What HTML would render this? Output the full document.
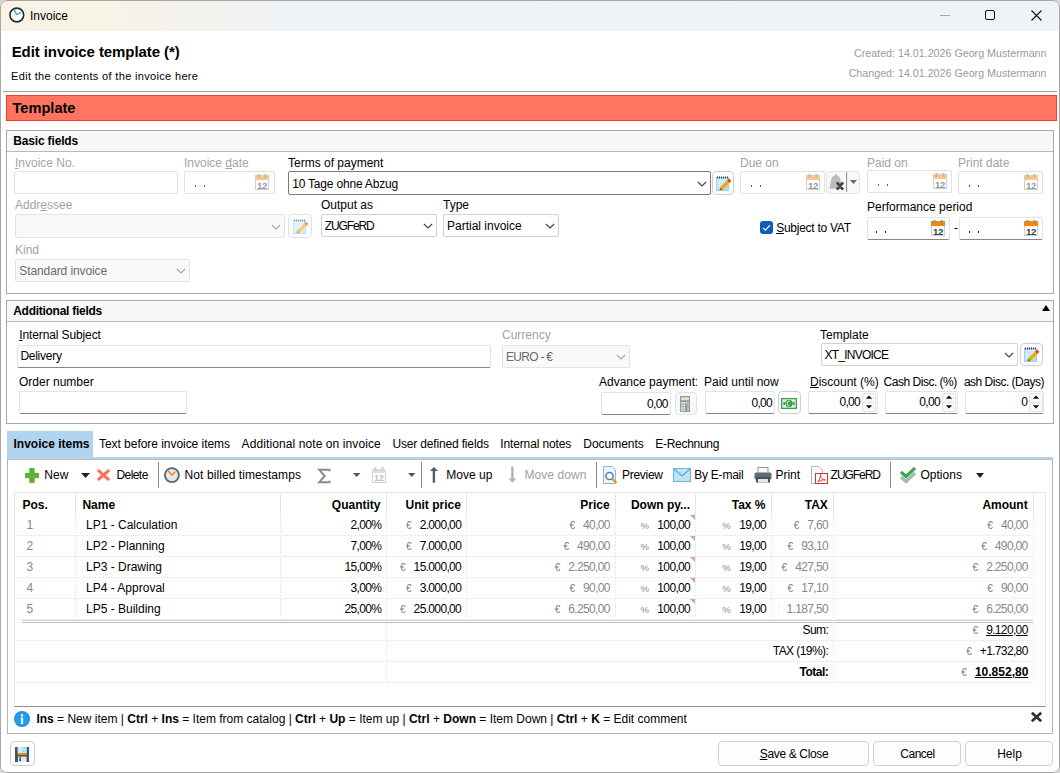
<!DOCTYPE html>
<html><head><meta charset="utf-8"><style>
html,body{margin:0;padding:0;width:1060px;height:773px;overflow:hidden;background:#d6d6d6;}
body{position:relative;font-family:"Liberation Sans",sans-serif;}
.b{position:absolute;}
.t{position:absolute;white-space:nowrap;line-height:0;}
.sym{font-size:10px;color:#7a7a7a;margin-right:8px;font-weight:normal;letter-spacing:0;}
.num{letter-spacing:-0.65px;}
.pct{font-size:9.5px;margin-right:8.5px;color:#8a8a8a;}
u{text-decoration-thickness:1px;text-underline-offset:0.5px;}
</style></head><body>
<div class="b" style="left:0;top:0;width:1060px;height:773px;background:#fff;border-radius:7px;"></div>
<div class="b" style="left:0px;top:0px;width:1060px;height:31px;background:linear-gradient(90deg,#faf3e5 0%,#f9f3e6 10%,#f2f1ed 19%,#eef2f8 29%,#eef2f9 100%);border-radius:7px 7px 0 0;"></div>
<div class="b" style="left:0px;top:0px;width:1060px;height:773px;border:1px solid #a7a7a7;border-radius:7px 7px 7px 7px;box-sizing:border-box;"></div>
<svg class="b" style="left:8px;top:7px" width="18" height="17" viewBox="0 0 18 17"><circle cx="8.8" cy="8" r="6.9" fill="#fff" stroke="#1f2b30" stroke-width="1.6"/><path d="M6.5 3.4 L8.6 7.6 L12.6 5.6" fill="none" stroke="#46b5bf" stroke-width="1.4" stroke-linecap="round" stroke-linejoin="round"/></svg>
<div class="t" style="left:30px;top:15.84px;font-size:12px;color:#000;font-weight:normal;">Invoice</div>
<div class="b" style="left:940px;top:15px;width:10px;height:1px;background:#a5a5a5;"></div>
<div class="b" style="left:985px;top:10px;width:10px;height:10px;border:1.3px solid #111;border-radius:2px;box-sizing:border-box;"></div>
<svg class="b" style="left:1031px;top:10px" width="11" height="11" viewBox="0 0 11 11"><path d="M0.5 0.5 L10.5 10.5 M10.5 0.5 L0.5 10.5" stroke="#111" stroke-width="1.1"/></svg>
<div class="t" style="left:11.7px;top:52.40px;font-size:15px;color:#000;font-weight:bold;letter-spacing:-0.085px;">Edit invoice template (*)</div>
<div class="t" style="left:11px;top:75.99px;font-size:11px;color:#000;font-weight:normal;letter-spacing:0.336px;">Edit the contents of the invoice here</div>
<div class="t" style="right:13.5px;top:53.29px;font-size:10.7px;color:#9a9a9a;font-weight:normal;">Created: 14.01.2026 Georg Mustermann</div>
<div class="t" style="right:13.5px;top:73.29px;font-size:10.7px;color:#9a9a9a;font-weight:normal;">Changed: 14.01.2026 Georg Mustermann</div>
<div class="b" style="left:3px;top:91px;width:1054px;height:1px;background:#a0a0a0;"></div>
<div class="b" style="left:6px;top:95px;width:1051px;height:26px;background:#ff7561;border:1px solid #f23e22;box-sizing:border-box;"></div>
<div class="t" style="left:12.5px;top:107.94px;font-size:14.6px;color:#000;font-weight:bold;">Template</div>
<div class="b" style="left:6px;top:130px;width:1048px;height:164px;border:1px solid #a9a9a9;box-sizing:border-box;"></div>
<div class="b" style="left:7px;top:131px;width:1046px;height:20px;background:#f7f7f7;"></div>
<div class="b" style="left:7px;top:151px;width:1046px;height:1px;background:#b9b9b9;"></div>
<div class="t" style="left:13.2px;top:140.84px;font-size:12px;color:#000;font-weight:bold;letter-spacing:-0.154px;">Basic fields</div>
<div class="t" style="left:15px;top:162.84px;font-size:12px;color:#a3a3a3;font-weight:normal;"><u>I</u>nvoice No.</div>
<div class="b" style="left:14px;top:171px;width:164px;height:23px;border:1px solid #e1e1e1;border-radius:2px;background:#fff;box-sizing:border-box;"></div>
<div class="t" style="left:184px;top:162.84px;font-size:12px;color:#a3a3a3;font-weight:normal;">Invoice <u>d</u>ate</div>
<div class="b" style="left:184px;top:171px;width:91px;height:23px;border:1px solid #e1e1e1;border-radius:2px;background:#fff;box-sizing:border-box;"></div>
<div class="b" style="left:195px;top:185px;width:1px;height:2px;background:#6b5a66;"></div>
<div class="b" style="left:204px;top:185px;width:1px;height:2px;background:#6b5a66;"></div>
<svg class="b" style="left:255px;top:174px" width="14" height="16" viewBox="0 0 14 16"><rect x="0.5" y="4.5" width="13" height="11" fill="#fff" stroke="#d0d0d0"/><rect x="0" y="1" width="14" height="5" fill="#ffc68a"/><rect x="2.6" y="0" width="1.8" height="4" fill="#a9bccb"/><rect x="9.6" y="0" width="1.8" height="4" fill="#a9bccb"/><text x="7" y="14.6" font-family="Liberation Sans" font-weight="bold" font-size="9.6" fill="#8e979c" text-anchor="middle" letter-spacing="-0.3">12</text></svg>
<div class="t" style="left:288px;top:162.84px;font-size:12px;color:#000;font-weight:normal;">Terms of payment</div>
<div class="b" style="left:288px;top:171px;width:423px;height:24px;border:1px solid #7a7a7a;border-radius:2px;background:#fff;box-sizing:border-box;"></div>
<div class="t" style="left:292.2px;top:183.84px;font-size:12px;color:#000;font-weight:normal;letter-spacing:-0.195px;">10 Tage ohne Abzug</div>
<svg class="b" style="left:697px;top:181px" width="10" height="6" viewBox="0 0 10 6"><path d="M0.9 1 L5 5 L9.1 1" fill="none" stroke="#444" stroke-width="1.15"/></svg>
<div class="b" style="left:712px;top:171px;width:22px;height:24px;border:1px solid #cfcfcf;border-radius:4px;background:#fcfcfc;box-sizing:border-box;"></div>
<svg class="b" style="left:716px;top:175px" width="15" height="16" viewBox="0 0 15 16"><g opacity="1"><rect x="0.5" y="2.5" width="12" height="13" fill="#cfeaf9" stroke="#9fcde8"/><path d="M1 15 L12 4 L12 15 Z" fill="#b3dcf3"/><path d="M1.5 1.5 v2 M3.5 1.5 v2 M5.5 1.5 v2 M7.5 1.5 v2 M9.5 1.5 v2 M11.5 1.5 v2" stroke="#2e3e4c" stroke-width="1"/><path d="M4.5 14.5 L13.2 5.8" stroke="#f2a800" stroke-width="3.2"/><path d="M12.3 6.7 L14.3 4.7" stroke="#e5421f" stroke-width="3.2"/><path d="M3.3 15.6 L5 13.2 L6 14.3 Z" fill="#333"/></g></svg>
<div class="t" style="left:740px;top:162.84px;font-size:12px;color:#a3a3a3;font-weight:normal;">Due on</div>
<div class="b" style="left:740px;top:171px;width:85px;height:23px;border:1px solid #e1e1e1;border-radius:2px;background:#fff;box-sizing:border-box;"></div>
<div class="b" style="left:751px;top:185px;width:1px;height:2px;background:#6b5a66;"></div>
<div class="b" style="left:760px;top:185px;width:1px;height:2px;background:#6b5a66;"></div>
<svg class="b" style="left:806px;top:174px" width="14" height="16" viewBox="0 0 14 16"><rect x="0.5" y="4.5" width="13" height="11" fill="#fff" stroke="#d0d0d0"/><rect x="0" y="1" width="14" height="5" fill="#ffc68a"/><rect x="2.6" y="0" width="1.8" height="4" fill="#a9bccb"/><rect x="9.6" y="0" width="1.8" height="4" fill="#a9bccb"/><text x="7" y="14.6" font-family="Liberation Sans" font-weight="bold" font-size="9.6" fill="#8e979c" text-anchor="middle" letter-spacing="-0.3">12</text></svg>
<div class="b" style="left:826px;top:171px;width:34px;height:23px;border:1px solid #e3e3e3;border-radius:4px;background:#f8f8f8;box-sizing:border-box;"></div>
<svg class="b" style="left:826px;top:171px" width="34" height="23" viewBox="0 0 34 23"><path d="M10 3 C11 3 11.5 4 11.5 4.7 C13.6 5.6 14.6 7.3 14.7 10 L15.5 17.8 H3.3 L4.8 10 C4.9 7.3 6 5.6 8.5 4.7 C8.5 4 9 3 10 3 Z" fill="#bdbdbd"/><path d="M11.6 12.4 L16.3 17.6 M16.3 12.4 L11.6 17.6" stroke="#454545" stroke-width="2.9" stroke-linecap="round"/><path d="M20.6 1 V21" stroke="#8c8c8c" stroke-width="1"/><path d="M23.9 8.9 H31 L27.45 13 Z" fill="#6a6a6a"/></svg>
<div class="t" style="left:867px;top:162.84px;font-size:12px;color:#a3a3a3;font-weight:normal;">Paid on</div>
<div class="b" style="left:867px;top:170px;width:85px;height:23px;border:1px solid #e1e1e1;border-radius:2px;background:#fff;box-sizing:border-box;"></div>
<div class="b" style="left:878px;top:184px;width:1px;height:2px;background:#6b5a66;"></div>
<div class="b" style="left:887px;top:184px;width:1px;height:2px;background:#6b5a66;"></div>
<svg class="b" style="left:933px;top:173px" width="14" height="16" viewBox="0 0 14 16"><rect x="0.5" y="4.5" width="13" height="11" fill="#fff" stroke="#d0d0d0"/><rect x="0" y="1" width="14" height="5" fill="#ffc68a"/><rect x="2.6" y="0" width="1.8" height="4" fill="#a9bccb"/><rect x="9.6" y="0" width="1.8" height="4" fill="#a9bccb"/><text x="7" y="14.6" font-family="Liberation Sans" font-weight="bold" font-size="9.6" fill="#8e979c" text-anchor="middle" letter-spacing="-0.3">12</text></svg>
<div class="t" style="left:958px;top:162.84px;font-size:12px;color:#a3a3a3;font-weight:normal;">Print date</div>
<div class="b" style="left:958px;top:171px;width:85px;height:23px;border:1px solid #e1e1e1;border-radius:2px;background:#fff;box-sizing:border-box;"></div>
<div class="b" style="left:969px;top:185px;width:1px;height:2px;background:#6b5a66;"></div>
<div class="b" style="left:978px;top:185px;width:1px;height:2px;background:#6b5a66;"></div>
<svg class="b" style="left:1024px;top:174px" width="14" height="16" viewBox="0 0 14 16"><rect x="0.5" y="4.5" width="13" height="11" fill="#fff" stroke="#d0d0d0"/><rect x="0" y="1" width="14" height="5" fill="#ffc68a"/><rect x="2.6" y="0" width="1.8" height="4" fill="#a9bccb"/><rect x="9.6" y="0" width="1.8" height="4" fill="#a9bccb"/><text x="7" y="14.6" font-family="Liberation Sans" font-weight="bold" font-size="9.6" fill="#8e979c" text-anchor="middle" letter-spacing="-0.3">12</text></svg>
<div class="t" style="left:15px;top:204.84px;font-size:12px;color:#a3a3a3;font-weight:normal;">Addr<u>e</u>ssee</div>
<div class="b" style="left:15px;top:214px;width:270px;height:24px;border:1px solid #e3e3e3;border-radius:2px;background:#f9f9f9;box-sizing:border-box;"></div>
<svg class="b" style="left:271px;top:224px" width="10" height="6" viewBox="0 0 10 6"><path d="M0.9 1 L5 5 L9.1 1" fill="none" stroke="#aaa" stroke-width="1.15"/></svg>
<div class="b" style="left:288px;top:214px;width:24px;height:24px;border:1px solid #e2e2e2;border-radius:4px;background:#fcfcfc;box-sizing:border-box;"></div>
<svg class="b" style="left:293px;top:218px" width="15" height="16" viewBox="0 0 15 16"><g opacity="0.55"><rect x="0.5" y="2.5" width="12" height="13" fill="#cfeaf9" stroke="#9fcde8"/><path d="M1 15 L12 4 L12 15 Z" fill="#b3dcf3"/><path d="M1.5 1.5 v2 M3.5 1.5 v2 M5.5 1.5 v2 M7.5 1.5 v2 M9.5 1.5 v2 M11.5 1.5 v2" stroke="#2e3e4c" stroke-width="1"/><path d="M4.5 14.5 L13.2 5.8" stroke="#f2a800" stroke-width="3.2"/><path d="M12.3 6.7 L14.3 4.7" stroke="#e5421f" stroke-width="3.2"/><path d="M3.3 15.6 L5 13.2 L6 14.3 Z" fill="#333"/></g></svg>
<div class="t" style="left:321px;top:204.84px;font-size:12px;color:#000;font-weight:normal;">Output as</div>
<div class="b" style="left:321px;top:214px;width:116px;height:23px;border:1px solid #d2d2d2;border-radius:2px;background:#fff;box-sizing:border-box;"></div>
<div class="t" style="left:324.7px;top:225.84px;font-size:12px;color:#000;font-weight:normal;letter-spacing:-1.111px;">ZUGFeRD</div>
<svg class="b" style="left:423px;top:223px" width="10" height="6" viewBox="0 0 10 6"><path d="M0.9 1 L5 5 L9.1 1" fill="none" stroke="#444" stroke-width="1.15"/></svg>
<div class="t" style="left:443px;top:204.84px;font-size:12px;color:#000;font-weight:normal;">Type</div>
<div class="b" style="left:443px;top:214px;width:116px;height:23px;border:1px solid #d2d2d2;border-radius:2px;background:#fff;box-sizing:border-box;"></div>
<div class="t" style="left:447px;top:225.84px;font-size:12px;color:#000;font-weight:normal;">Partial invoice</div>
<svg class="b" style="left:545px;top:223px" width="10" height="6" viewBox="0 0 10 6"><path d="M0.9 1 L5 5 L9.1 1" fill="none" stroke="#444" stroke-width="1.15"/></svg>
<div class="b" style="left:760px;top:221px;width:13px;height:13px;background:#0f5cc0;border-radius:3px;"></div>
<svg class="b" style="left:760px;top:221px" width="13" height="13" viewBox="0 0 13 13"><path d="M3 6.8 L5.4 9.2 L10 4.2" fill="none" stroke="#fff" stroke-width="1.2"/></svg>
<div class="t" style="left:776.2px;top:227.84px;font-size:12px;color:#000;font-weight:normal;letter-spacing:-0.266px;"><u>S</u>ubject to VAT</div>
<div class="t" style="left:867px;top:206.84px;font-size:12px;color:#000;font-weight:normal;">Performance period</div>
<div class="b" style="left:867px;top:217px;width:83px;height:23px;border:1px solid #e3e3e3;border-bottom:1px solid #858585;border-radius:2px;background:#fff;box-sizing:border-box;"></div>
<div class="b" style="left:876px;top:231px;width:1px;height:2px;background:#3a1028;"></div>
<div class="b" style="left:885px;top:231px;width:1px;height:2px;background:#3a1028;"></div>
<svg class="b" style="left:931px;top:220px" width="14" height="16" viewBox="0 0 14 16"><rect x="0.5" y="4.5" width="13" height="11" fill="#fff" stroke="#d0d0d0"/><rect x="0" y="1" width="14" height="5" fill="#ff8500"/><rect x="2.6" y="0" width="1.8" height="4" fill="#7d98aa"/><rect x="9.6" y="0" width="1.8" height="4" fill="#7d98aa"/><text x="7" y="14.6" font-family="Liberation Sans" font-weight="bold" font-size="9.6" fill="#36434b" text-anchor="middle" letter-spacing="-0.3">12</text></svg>
<div class="t" style="left:954px;top:227.84px;font-size:12px;color:#000;font-weight:normal;">-</div>
<div class="b" style="left:959px;top:217px;width:84px;height:23px;border:1px solid #e3e3e3;border-bottom:1px solid #858585;border-radius:2px;background:#fff;box-sizing:border-box;"></div>
<div class="b" style="left:969px;top:231px;width:1px;height:2px;background:#3a1028;"></div>
<div class="b" style="left:978px;top:231px;width:1px;height:2px;background:#3a1028;"></div>
<svg class="b" style="left:1024px;top:220px" width="14" height="16" viewBox="0 0 14 16"><rect x="0.5" y="4.5" width="13" height="11" fill="#fff" stroke="#d0d0d0"/><rect x="0" y="1" width="14" height="5" fill="#ff8500"/><rect x="2.6" y="0" width="1.8" height="4" fill="#7d98aa"/><rect x="9.6" y="0" width="1.8" height="4" fill="#7d98aa"/><text x="7" y="14.6" font-family="Liberation Sans" font-weight="bold" font-size="9.6" fill="#36434b" text-anchor="middle" letter-spacing="-0.3">12</text></svg>
<div class="t" style="left:15px;top:250.34px;font-size:12px;color:#a3a3a3;font-weight:normal;">Kind</div>
<div class="b" style="left:15px;top:259px;width:175px;height:23px;border:1px solid #e3e3e3;border-radius:2px;background:#f9f9f9;box-sizing:border-box;"></div>
<div class="t" style="left:19.3px;top:270.84px;font-size:12px;color:#6b6b6b;font-weight:normal;letter-spacing:-0.106px;">Standard invoice</div>
<svg class="b" style="left:176px;top:268px" width="10" height="6" viewBox="0 0 10 6"><path d="M0.9 1 L5 5 L9.1 1" fill="none" stroke="#aaa" stroke-width="1.15"/></svg>
<div class="b" style="left:6px;top:300px;width:1048px;height:124px;border:1px solid #a9a9a9;box-sizing:border-box;"></div>
<div class="b" style="left:7px;top:301px;width:1046px;height:20px;background:#f7f7f7;"></div>
<div class="b" style="left:7px;top:321px;width:1046px;height:1px;background:#b9b9b9;"></div>
<div class="t" style="left:13.2px;top:310.84px;font-size:12px;color:#000;font-weight:bold;letter-spacing:-0.271px;">Additional fields</div>
<svg class="b" style="left:1041px;top:304px" width="10" height="8" viewBox="0 0 10 8"><path d="M1 7 L5 1 L9 7 Z" fill="#000"/></svg>
<div class="t" style="left:19.2px;top:334.84px;font-size:12px;color:#000;font-weight:normal;letter-spacing:-0.112px;"><u>I</u>nternal Subject</div>
<div class="b" style="left:17px;top:345px;width:474px;height:23px;border:1px solid #e3e3e3;border-bottom:1px solid #858585;border-radius:2px;background:#fff;box-sizing:border-box;"></div>
<div class="t" style="left:20.4px;top:355.84px;font-size:12px;color:#000;font-weight:normal;letter-spacing:-0.263px;">Delivery</div>
<div class="t" style="left:502px;top:334.84px;font-size:12px;color:#a3a3a3;font-weight:normal;">Currency</div>
<div class="b" style="left:502px;top:345px;width:128px;height:23px;border:1px solid #e3e3e3;border-radius:2px;background:#f9f9f9;box-sizing:border-box;"></div>
<div class="t" style="left:506px;top:356.84px;font-size:12px;color:#6b6b6b;font-weight:normal;letter-spacing:-0.716px;">EURO - €</div>
<svg class="b" style="left:616px;top:354px" width="10" height="6" viewBox="0 0 10 6"><path d="M0.9 1 L5 5 L9.1 1" fill="none" stroke="#aaa" stroke-width="1.15"/></svg>
<div class="t" style="left:820px;top:334.84px;font-size:12px;color:#000;font-weight:normal;">Template</div>
<div class="b" style="left:821px;top:343px;width:197px;height:23px;border:1px solid #d2d2d2;border-radius:2px;background:#fff;box-sizing:border-box;"></div>
<div class="t" style="left:824.4px;top:354.84px;font-size:12px;color:#000;font-weight:normal;letter-spacing:-0.750px;">XT_INVOICE</div>
<svg class="b" style="left:1004px;top:352px" width="10" height="6" viewBox="0 0 10 6"><path d="M0.9 1 L5 5 L9.1 1" fill="none" stroke="#444" stroke-width="1.15"/></svg>
<div class="b" style="left:1020px;top:343px;width:23px;height:23px;border:1px solid #cfcfcf;border-radius:4px;background:#fcfcfc;box-sizing:border-box;"></div>
<svg class="b" style="left:1024px;top:346px" width="15" height="16" viewBox="0 0 15 16"><g opacity="1"><rect x="0.5" y="2.5" width="12" height="13" fill="#cfeaf9" stroke="#9fcde8"/><path d="M1 15 L12 4 L12 15 Z" fill="#b3dcf3"/><path d="M1.5 1.5 v2 M3.5 1.5 v2 M5.5 1.5 v2 M7.5 1.5 v2 M9.5 1.5 v2 M11.5 1.5 v2" stroke="#2e3e4c" stroke-width="1"/><path d="M4.5 14.5 L13.2 5.8" stroke="#f2a800" stroke-width="3.2"/><path d="M12.3 6.7 L14.3 4.7" stroke="#e5421f" stroke-width="3.2"/><path d="M3.3 15.6 L5 13.2 L6 14.3 Z" fill="#333"/></g></svg>
<div class="t" style="left:19px;top:381.84px;font-size:12px;color:#000;font-weight:normal;">Order number</div>
<div class="b" style="left:19px;top:391px;width:168px;height:23px;border:1px solid #e3e3e3;border-bottom:1px solid #858585;border-radius:2px;background:#fff;box-sizing:border-box;"></div>
<div class="b" style="left:599px;top:372px;width:98px;height:20px;overflow:hidden;"><div class="t" style="left:0px;top:9.84px;font-size:12px;color:#000;font-weight:normal;">Advance payment:</div></div>
<div class="b" style="left:601px;top:392px;width:70px;height:23px;border:1px solid #e3e3e3;border-bottom:1px solid #858585;border-radius:2px;background:#fff;box-sizing:border-box;"></div>
<div class="t" style="right:392.15px;top:403.84px;font-size:12px;color:#000;font-weight:normal;"><span class="num">0,00</span></div>
<div class="b" style="left:675px;top:392px;width:22px;height:23px;border:1px solid #e3e3e3;border-radius:4px;background:#f8f8f8;box-sizing:border-box;"></div>
<svg class="b" style="left:680px;top:396px" width="10" height="16" viewBox="0 0 10 16"><rect x="0" y="0" width="10" height="16" fill="#909da4"/><rect x="1.2" y="1.2" width="7.6" height="3" fill="#d6edc4"/><g fill="#f4f6f7"><rect x="1.2" y="6" width="1.6" height="1.6"/><rect x="3.4" y="6" width="1.6" height="1.6"/><rect x="5.6" y="6" width="1.2" height="1.6"/><rect x="1.2" y="8.6" width="1.6" height="1.6"/><rect x="3.4" y="8.6" width="1.6" height="1.6"/><rect x="1.2" y="11.2" width="1.6" height="1.6"/><rect x="3.4" y="11.2" width="1.6" height="1.6"/><rect x="1.2" y="13.6" width="1.6" height="1.4"/><rect x="3.4" y="13.6" width="1.6" height="1.4"/></g><rect x="7.2" y="6" width="1.8" height="4" fill="#a9d08e"/><rect x="7.2" y="11" width="1.8" height="4" fill="#f5b859"/></svg>
<div class="t" style="left:704px;top:381.84px;font-size:12px;color:#000;font-weight:normal;">Paid until now</div>
<div class="b" style="left:705px;top:391px;width:70px;height:23px;border:1px solid #e3e3e3;border-bottom:1px solid #858585;border-radius:2px;background:#fff;box-sizing:border-box;"></div>
<div class="t" style="right:287.85px;top:402.84px;font-size:12px;color:#000;font-weight:normal;"><span class="num">0,00</span></div>
<div class="b" style="left:778px;top:391px;width:23px;height:23px;border:1px solid #cdcdcd;border-radius:4px;background:#fdfdfd;box-sizing:border-box;"></div>
<svg class="b" style="left:781px;top:398px" width="16" height="11" viewBox="0 0 16 11"><rect x="0" y="0" width="16" height="11" fill="#3ba24c"/><rect x="1.3" y="1.3" width="13.4" height="8.4" fill="#eef3f0"/><circle cx="8" cy="5.5" r="3.7" fill="#3ba24c"/><path d="M8.6 3 A2.5 2.5 0 1 0 8.6 8" fill="none" stroke="#e6efe8" stroke-width="1"/><path d="M2.4 3.5 A2 2 0 0 1 2.4 7.5 Z" fill="#3ba24c"/><path d="M13.6 3.5 A2 2 0 0 0 13.6 7.5 Z" fill="#3ba24c"/></svg>
<div class="t" style="left:810px;top:381.84px;font-size:12px;color:#000;font-weight:normal;"><u>D</u>iscount (%)</div>
<div class="b" style="left:808px;top:391px;width:70px;height:23px;border:1px solid #e3e3e3;border-bottom:1px solid #858585;border-radius:2px;background:#fff;box-sizing:border-box;"></div>
<div class="t" style="right:199.85000000000002px;top:401.84px;font-size:12px;color:#000;font-weight:normal;"><span class="num">0,00</span></div>
<div class="b" style="left:862px;top:393px;width:14px;height:10px;border:1px solid #e2e2e2;border-radius:2px;background:#f9f9f9;box-sizing:border-box;"></div>
<div class="b" style="left:862px;top:402px;width:14px;height:10px;border:1px solid #e2e2e2;border-radius:2px;background:#f9f9f9;box-sizing:border-box;"></div>
<svg class="b" style="left:862px;top:393px" width="14" height="19" viewBox="0 0 14 19"><path d="M3.8 5.8 L7 2.4 L10.2 5.8 Z" fill="#111"/><path d="M3.8 12.2 L7 15.6 L10.2 12.2 Z" fill="#111"/></svg>
<div class="t" style="left:883.6px;top:381.84px;font-size:12px;color:#000;font-weight:normal;letter-spacing:-0.485px;">Cash Disc. (%)</div>
<div class="b" style="left:885px;top:391px;width:73px;height:23px;border:1px solid #e3e3e3;border-bottom:1px solid #858585;border-radius:2px;background:#fff;box-sizing:border-box;"></div>
<div class="t" style="right:119.94999999999993px;top:401.84px;font-size:12px;color:#000;font-weight:normal;"><span class="num">0,00</span></div>
<div class="b" style="left:942px;top:393px;width:14px;height:10px;border:1px solid #e2e2e2;border-radius:2px;background:#f9f9f9;box-sizing:border-box;"></div>
<div class="b" style="left:942px;top:402px;width:14px;height:10px;border:1px solid #e2e2e2;border-radius:2px;background:#f9f9f9;box-sizing:border-box;"></div>
<svg class="b" style="left:942px;top:393px" width="14" height="19" viewBox="0 0 14 19"><path d="M3.8 5.8 L7 2.4 L10.2 5.8 Z" fill="#111"/><path d="M3.8 12.2 L7 15.6 L10.2 12.2 Z" fill="#111"/></svg>
<div class="t" style="left:963.9px;top:381.84px;font-size:12px;color:#000;font-weight:normal;letter-spacing:-0.501px;">ash Disc. (Days)</div>
<div class="b" style="left:965px;top:391px;width:79px;height:23px;border:1px solid #e3e3e3;border-bottom:1px solid #858585;border-radius:2px;background:#fff;box-sizing:border-box;"></div>
<div class="t" style="right:32.200000000000045px;top:401.84px;font-size:12px;color:#000;font-weight:normal;">0</div>
<div class="b" style="left:1029px;top:393px;width:14px;height:10px;border:1px solid #e2e2e2;border-radius:2px;background:#f9f9f9;box-sizing:border-box;"></div>
<div class="b" style="left:1029px;top:402px;width:14px;height:10px;border:1px solid #e2e2e2;border-radius:2px;background:#f9f9f9;box-sizing:border-box;"></div>
<svg class="b" style="left:1029px;top:393px" width="14" height="19" viewBox="0 0 14 19"><path d="M3.8 5.8 L7 2.4 L10.2 5.8 Z" fill="#111"/><path d="M3.8 12.2 L7 15.6 L10.2 12.2 Z" fill="#111"/></svg>
<div class="b" style="left:7px;top:431px;width:86px;height:28px;background:#b1d5ef;"></div>
<div class="t" style="left:13.5px;top:443.84px;font-size:12px;color:#000;font-weight:bold;">Invoice items</div>
<div class="t" style="left:99px;top:443.84px;font-size:12px;color:#000;font-weight:normal;letter-spacing:-0.044px;">Text before invoice items</div>
<div class="t" style="left:241.6px;top:443.84px;font-size:12px;color:#000;font-weight:normal;letter-spacing:0.094px;">Additional note on invoice</div>
<div class="t" style="left:392.4px;top:443.84px;font-size:12px;color:#000;font-weight:normal;letter-spacing:-0.160px;">User defined fields</div>
<div class="t" style="left:500.2px;top:443.84px;font-size:12px;color:#000;font-weight:normal;letter-spacing:-0.124px;">Internal notes</div>
<div class="t" style="left:583.3px;top:443.84px;font-size:12px;color:#000;font-weight:normal;letter-spacing:-0.036px;">Documents</div>
<div class="t" style="left:655.2px;top:443.84px;font-size:12px;color:#000;font-weight:normal;letter-spacing:-0.279px;">E-Rechnung</div>
<div class="b" style="left:7px;top:457px;width:1046px;height:2px;background:#b1d5ef;"></div>
<div class="b" style="left:7px;top:459px;width:1046px;height:275px;border:1px solid #b4b4b4;border-top:1px solid #bcbcbc;background:#fff;box-sizing:border-box;"></div>
<svg class="b" style="left:25px;top:468px" width="14" height="15" viewBox="0 0 14 15"><path d="M4.7 0.5 H9.2 V5.3 H13.8 V9.8 H9.2 V14.5 H4.7 V9.8 H0.2 V5.3 H4.7 Z" fill="#5cb531" stroke="#3f9a1c" stroke-width="0.6"/></svg>
<div class="t" style="left:44.3px;top:474.64px;font-size:12px;color:#000;font-weight:normal;">New</div>
<svg class="b" style="left:81px;top:473px" width="9" height="5" viewBox="0 0 9 5"><path d="M0 0 H9 L4.5 5 Z" fill="#222"/></svg>
<svg class="b" style="left:97px;top:469px" width="13" height="12" viewBox="0 0 13 12"><path d="M1.8 1.8 L11.2 10.2 M11.2 1.8 L1.8 10.2" stroke="#ff6e5b" stroke-width="3" stroke-linecap="round"/></svg>
<div class="t" style="left:116.5px;top:474.64px;font-size:12px;color:#000;font-weight:normal;letter-spacing:-0.577px;">Delete</div>
<div class="b" style="left:158px;top:462px;width:1px;height:26px;background:#8a8a8a;"></div>
<svg class="b" style="left:163px;top:467px" width="17" height="17" viewBox="0 0 17 17"><circle cx="8.9" cy="8.1" r="7" fill="#e2e7ea" stroke="#566a75" stroke-width="1.9"/><path d="M5.1 3.9 L8.8 8.1 L11.8 5.1" fill="none" stroke="#ff8c1a" stroke-width="1.6" stroke-linecap="round"/></svg>
<div class="t" style="left:184.6px;top:474.64px;font-size:12px;color:#000;font-weight:normal;letter-spacing:0.080px;">Not billed timestamps</div>
<svg class="b" style="left:317px;top:468px" width="14" height="16" viewBox="0 0 14 16"><path d="M12.5 3.2 V1.8 H2.3 L7.7 8 L2.3 14.2 H12.5 V12.8" fill="none" stroke="#8a8a8a" stroke-width="2" stroke-linejoin="miter"/></svg>
<svg class="b" style="left:353px;top:473px" width="8" height="4" viewBox="0 0 8 4"><path d="M0 0 H7.4 L3.7 4 Z" fill="#555"/></svg>
<svg class="b" style="left:372px;top:467px" width="14" height="16" viewBox="0 0 14 16"><rect x="0.5" y="2.5" width="13" height="13" fill="#fff" stroke="#cfcfcf"/><rect x="0" y="2" width="14" height="4" fill="#dedede"/><rect x="2.5" y="0" width="2" height="4" fill="#cbcbcb"/><rect x="9.5" y="0" width="2" height="4" fill="#cbcbcb"/><text x="7" y="14.3" font-family="Liberation Sans" font-weight="bold" font-size="8.5" fill="#bdbdbd" text-anchor="middle">12</text></svg>
<svg class="b" style="left:408px;top:473px" width="8" height="4" viewBox="0 0 8 4"><path d="M0 0 H7.4 L3.7 4 Z" fill="#555"/></svg>
<div class="b" style="left:421px;top:462px;width:1px;height:26px;background:#8a8a8a;"></div>
<svg class="b" style="left:429px;top:466px" width="10" height="18" viewBox="0 0 10 18"><path d="M0.9 4.9 L5 0.9 L9 4.9 Z" fill="#4a5f6a"/><rect x="3.7" y="4.5" width="2.4" height="12.2" fill="#4a5f6a"/></svg>
<div class="t" style="left:446.3px;top:474.64px;font-size:12px;color:#000;font-weight:normal;letter-spacing:0.029px;">Move up</div>
<svg class="b" style="left:508px;top:466px" width="10" height="18" viewBox="0 0 10 18"><path d="M0.5 12.6 L4.4 16.7 L8.3 12.6 Z" fill="#b3b3b3"/><rect x="3.2" y="0.5" width="2.4" height="12.5" fill="#b3b3b3"/></svg>
<div class="t" style="left:524.5px;top:474.64px;font-size:12px;color:#9e9e9e;font-weight:normal;letter-spacing:0.067px;">Move down</div>
<div class="b" style="left:596px;top:462px;width:1px;height:26px;background:#8a8a8a;"></div>
<svg class="b" style="left:603px;top:466px" width="16" height="18" viewBox="0 0 16 18"><path d="M0.5 0.5 H9 L12.5 4 V17.5 H0.5 Z" fill="#eef6fc" stroke="#8cb6d6"/><circle cx="6.5" cy="10" r="3.6" fill="#fff" stroke="#3e7fb6" stroke-width="1.5"/><path d="M9 12.5 L13.5 17" stroke="#e8941f" stroke-width="2.2"/></svg>
<div class="t" style="left:622px;top:474.64px;font-size:12px;color:#000;font-weight:normal;letter-spacing:-0.280px;">Preview</div>
<svg class="b" style="left:673px;top:468px" width="18" height="14" viewBox="0 0 18 14"><rect x="0.5" y="0.5" width="17" height="13" fill="#bfe2f7" stroke="#6fb3e0"/><path d="M0.5 0.5 L9 8 L17.5 0.5" fill="none" stroke="#5aa7da" stroke-width="1.1"/></svg>
<div class="t" style="left:694.2px;top:474.64px;font-size:12px;color:#000;font-weight:normal;letter-spacing:-0.230px;">By E-mail</div>
<svg class="b" style="left:754px;top:467px" width="18" height="16" viewBox="0 0 18 16"><rect x="4" y="0.5" width="10" height="6" fill="#f8f8f8" stroke="#909aa0"/><rect x="0.5" y="5.5" width="17" height="7" rx="1.5" fill="#5c6c78"/><rect x="2" y="10" width="14" height="5.5" fill="#44525c"/><rect x="4" y="12" width="10" height="3.5" fill="#dfe5e8"/></svg>
<div class="t" style="left:775.4px;top:474.64px;font-size:12px;color:#000;font-weight:normal;">Print</div>
<svg class="b" style="left:811px;top:466px" width="17" height="18" viewBox="0 0 17 18"><path d="M0.5 0.5 H8 L11.5 4 V17.5 H0.5 Z" fill="#fff" stroke="#9bbbd2"/><rect x="4.5" y="7.5" width="12" height="10" fill="#fff" stroke="#d7322a"/><path d="M7 16 C9 12 10 10 10 8.5 C10 7.5 9 8 9.5 10 C10 12 12 14 14.5 14 C12 13.5 9 14.5 7 16 Z" fill="none" stroke="#d7322a" stroke-width="0.9"/></svg>
<div class="t" style="left:830.6px;top:474.64px;font-size:12px;color:#000;font-weight:normal;letter-spacing:-1.044px;">ZUGFeRD</div>
<div class="b" style="left:890px;top:462px;width:1px;height:26px;background:#8a8a8a;"></div>
<svg class="b" style="left:900px;top:467px" width="16" height="17" viewBox="0 0 16 17"><path d="M1 10 L6 14.5 L15 6" fill="none" stroke="#a9b5bc" stroke-width="3.2"/><path d="M1 5 L6 9.5 L15 1" fill="none" stroke="#3fa64b" stroke-width="3.2"/></svg>
<div class="t" style="left:920.4px;top:474.64px;font-size:12px;color:#000;font-weight:normal;letter-spacing:0.024px;">Options</div>
<svg class="b" style="left:976px;top:473px" width="8" height="5" viewBox="0 0 8 5"><path d="M0 0 H8 L4 5 Z" fill="#222"/></svg>
<div class="b" style="left:14px;top:492px;width:1032px;height:215px;border:1px solid #e6e6e6;border-bottom:1px solid #8e8e8e;background:#fff;box-sizing:border-box;"></div>
<div class="b" style="left:75px;top:494px;width:1px;height:21px;background:#e3e3e3;"></div>
<div class="b" style="left:280px;top:494px;width:1px;height:21px;background:#e3e3e3;"></div>
<div class="b" style="left:386px;top:494px;width:1px;height:21px;background:#e3e3e3;"></div>
<div class="b" style="left:466px;top:494px;width:1px;height:21px;background:#e3e3e3;"></div>
<div class="b" style="left:615px;top:494px;width:1px;height:21px;background:#e3e3e3;"></div>
<div class="b" style="left:695px;top:494px;width:1px;height:21px;background:#e3e3e3;"></div>
<div class="b" style="left:771px;top:494px;width:1px;height:21px;background:#e3e3e3;"></div>
<div class="b" style="left:833px;top:494px;width:1px;height:21px;background:#e3e3e3;"></div>
<div class="b" style="left:1033px;top:494px;width:1px;height:21px;background:#e3e3e3;"></div>
<div class="t" style="left:22.4px;top:504.64px;font-size:12px;color:#000;font-weight:bold;">Pos.</div>
<div class="t" style="left:82.4px;top:504.64px;font-size:12px;color:#000;font-weight:bold;">Name</div>
<div class="t" style="right:679.5px;top:504.64px;font-size:12px;color:#000;font-weight:bold;">Quantity</div>
<div class="t" style="right:599.2px;top:504.64px;font-size:12px;color:#000;font-weight:bold;">Unit price</div>
<div class="t" style="right:450.4px;top:504.64px;font-size:12px;color:#000;font-weight:bold;">Price</div>
<div class="t" style="right:370px;top:504.64px;font-size:12px;color:#000;font-weight:bold;">Down py...</div>
<div class="t" style="right:294.5px;top:504.64px;font-size:12px;color:#000;font-weight:bold;">Tax %</div>
<div class="t" style="right:232.20000000000005px;top:504.64px;font-size:12px;color:#000;font-weight:bold;">TAX</div>
<div class="t" style="right:32.299999999999955px;top:504.64px;font-size:12px;color:#000;font-weight:bold;">Amount</div>
<div class="b" style="left:17px;top:535px;width:1016px;height:1px;background-image:linear-gradient(90deg,#e2e2e2 50%,transparent 50%);background-size:2px 1px;"></div>
<div class="b" style="left:75px;top:515px;width:1px;height:20px;background-image:linear-gradient(180deg,#e4e4e4 50%,transparent 50%);background-size:1px 2px;"></div>
<div class="b" style="left:280px;top:515px;width:1px;height:20px;background-image:linear-gradient(180deg,#e4e4e4 50%,transparent 50%);background-size:1px 2px;"></div>
<div class="b" style="left:386px;top:515px;width:1px;height:20px;background-image:linear-gradient(180deg,#e4e4e4 50%,transparent 50%);background-size:1px 2px;"></div>
<div class="b" style="left:466px;top:515px;width:1px;height:20px;background-image:linear-gradient(180deg,#e4e4e4 50%,transparent 50%);background-size:1px 2px;"></div>
<div class="b" style="left:615px;top:515px;width:1px;height:20px;background-image:linear-gradient(180deg,#e4e4e4 50%,transparent 50%);background-size:1px 2px;"></div>
<div class="b" style="left:695px;top:515px;width:1px;height:20px;background-image:linear-gradient(180deg,#e4e4e4 50%,transparent 50%);background-size:1px 2px;"></div>
<div class="b" style="left:771px;top:515px;width:1px;height:20px;background-image:linear-gradient(180deg,#e4e4e4 50%,transparent 50%);background-size:1px 2px;"></div>
<div class="b" style="left:833px;top:515px;width:1px;height:20px;background-image:linear-gradient(180deg,#e4e4e4 50%,transparent 50%);background-size:1px 2px;"></div>
<div class="b" style="left:1033px;top:515px;width:1px;height:20px;background-image:linear-gradient(180deg,#e4e4e4 50%,transparent 50%);background-size:1px 2px;"></div>
<div class="t" style="left:26.5px;top:525.44px;font-size:12px;color:#888888;font-weight:normal;">1</div>
<div class="t" style="left:86px;top:525.44px;font-size:12px;color:#000;font-weight:normal;">LP1 - Calculation</div>
<div class="t" style="right:678.65px;top:525.44px;font-size:12px;color:#000;font-weight:normal;"><span class="num">2,00%</span></div>
<div class="t" style="right:598.8499999999999px;top:525.44px;font-size:12px;color:#000;font-weight:normal;"><span class="sym">€</span><span class="num">2.000,00</span></div>
<div class="t" style="right:450.15px;top:525.44px;font-size:12px;color:#888888;font-weight:normal;"><span class="sym">€</span><span class="num">40,00</span></div>
<div class="t" style="right:369.85px;top:525.44px;font-size:12px;color:#000;font-weight:normal;"><span class="sym pct">%</span><span class="num">100,00</span></div>
<svg class="b" style="left:690px;top:515px" width="5" height="5" viewBox="0 0 5 5"><path d="M0 0 H5 V5 Z" fill="#d8a0a0"/></svg>
<div class="t" style="right:293.94999999999993px;top:525.44px;font-size:12px;color:#000;font-weight:normal;"><span class="sym pct">%</span><span class="num">19,00</span></div>
<div class="b" style="left:778px;top:515px;width:55px;height:20px;overflow:hidden;"><div class="t" style="right:5.0499999999999545px;top:10.44px;font-size:12px;color:#888888;font-weight:normal;"><span class="sym">€</span><span class="num">7,60</span></div></div>
<div class="t" style="right:32.350000000000136px;top:525.44px;font-size:12px;color:#888888;font-weight:normal;"><span class="sym">€</span><span class="num">40,00</span></div>
<div class="b" style="left:17px;top:556px;width:1016px;height:1px;background-image:linear-gradient(90deg,#e2e2e2 50%,transparent 50%);background-size:2px 1px;"></div>
<div class="b" style="left:75px;top:536px;width:1px;height:20px;background-image:linear-gradient(180deg,#e4e4e4 50%,transparent 50%);background-size:1px 2px;"></div>
<div class="b" style="left:280px;top:536px;width:1px;height:20px;background-image:linear-gradient(180deg,#e4e4e4 50%,transparent 50%);background-size:1px 2px;"></div>
<div class="b" style="left:386px;top:536px;width:1px;height:20px;background-image:linear-gradient(180deg,#e4e4e4 50%,transparent 50%);background-size:1px 2px;"></div>
<div class="b" style="left:466px;top:536px;width:1px;height:20px;background-image:linear-gradient(180deg,#e4e4e4 50%,transparent 50%);background-size:1px 2px;"></div>
<div class="b" style="left:615px;top:536px;width:1px;height:20px;background-image:linear-gradient(180deg,#e4e4e4 50%,transparent 50%);background-size:1px 2px;"></div>
<div class="b" style="left:695px;top:536px;width:1px;height:20px;background-image:linear-gradient(180deg,#e4e4e4 50%,transparent 50%);background-size:1px 2px;"></div>
<div class="b" style="left:771px;top:536px;width:1px;height:20px;background-image:linear-gradient(180deg,#e4e4e4 50%,transparent 50%);background-size:1px 2px;"></div>
<div class="b" style="left:833px;top:536px;width:1px;height:20px;background-image:linear-gradient(180deg,#e4e4e4 50%,transparent 50%);background-size:1px 2px;"></div>
<div class="b" style="left:1033px;top:536px;width:1px;height:20px;background-image:linear-gradient(180deg,#e4e4e4 50%,transparent 50%);background-size:1px 2px;"></div>
<div class="t" style="left:26.5px;top:546.44px;font-size:12px;color:#888888;font-weight:normal;">2</div>
<div class="t" style="left:86px;top:546.44px;font-size:12px;color:#000;font-weight:normal;">LP2 - Planning</div>
<div class="t" style="right:678.65px;top:546.44px;font-size:12px;color:#000;font-weight:normal;"><span class="num">7,00%</span></div>
<div class="t" style="right:598.8499999999999px;top:546.44px;font-size:12px;color:#000;font-weight:normal;"><span class="sym">€</span><span class="num">7.000,00</span></div>
<div class="t" style="right:450.15px;top:546.44px;font-size:12px;color:#888888;font-weight:normal;"><span class="sym">€</span><span class="num">490,00</span></div>
<div class="t" style="right:369.85px;top:546.44px;font-size:12px;color:#000;font-weight:normal;"><span class="sym pct">%</span><span class="num">100,00</span></div>
<svg class="b" style="left:690px;top:536px" width="5" height="5" viewBox="0 0 5 5"><path d="M0 0 H5 V5 Z" fill="#d8a0a0"/></svg>
<div class="t" style="right:293.94999999999993px;top:546.44px;font-size:12px;color:#000;font-weight:normal;"><span class="sym pct">%</span><span class="num">19,00</span></div>
<div class="b" style="left:778px;top:536px;width:55px;height:20px;overflow:hidden;"><div class="t" style="right:5.0499999999999545px;top:10.44px;font-size:12px;color:#888888;font-weight:normal;"><span class="sym">€</span><span class="num">93,10</span></div></div>
<div class="t" style="right:32.350000000000136px;top:546.44px;font-size:12px;color:#888888;font-weight:normal;"><span class="sym">€</span><span class="num">490,00</span></div>
<div class="b" style="left:17px;top:577px;width:1016px;height:1px;background-image:linear-gradient(90deg,#e2e2e2 50%,transparent 50%);background-size:2px 1px;"></div>
<div class="b" style="left:75px;top:557px;width:1px;height:20px;background-image:linear-gradient(180deg,#e4e4e4 50%,transparent 50%);background-size:1px 2px;"></div>
<div class="b" style="left:280px;top:557px;width:1px;height:20px;background-image:linear-gradient(180deg,#e4e4e4 50%,transparent 50%);background-size:1px 2px;"></div>
<div class="b" style="left:386px;top:557px;width:1px;height:20px;background-image:linear-gradient(180deg,#e4e4e4 50%,transparent 50%);background-size:1px 2px;"></div>
<div class="b" style="left:466px;top:557px;width:1px;height:20px;background-image:linear-gradient(180deg,#e4e4e4 50%,transparent 50%);background-size:1px 2px;"></div>
<div class="b" style="left:615px;top:557px;width:1px;height:20px;background-image:linear-gradient(180deg,#e4e4e4 50%,transparent 50%);background-size:1px 2px;"></div>
<div class="b" style="left:695px;top:557px;width:1px;height:20px;background-image:linear-gradient(180deg,#e4e4e4 50%,transparent 50%);background-size:1px 2px;"></div>
<div class="b" style="left:771px;top:557px;width:1px;height:20px;background-image:linear-gradient(180deg,#e4e4e4 50%,transparent 50%);background-size:1px 2px;"></div>
<div class="b" style="left:833px;top:557px;width:1px;height:20px;background-image:linear-gradient(180deg,#e4e4e4 50%,transparent 50%);background-size:1px 2px;"></div>
<div class="b" style="left:1033px;top:557px;width:1px;height:20px;background-image:linear-gradient(180deg,#e4e4e4 50%,transparent 50%);background-size:1px 2px;"></div>
<div class="t" style="left:26.5px;top:567.44px;font-size:12px;color:#888888;font-weight:normal;">3</div>
<div class="t" style="left:86px;top:567.44px;font-size:12px;color:#000;font-weight:normal;">LP3 - Drawing</div>
<div class="t" style="right:678.65px;top:567.44px;font-size:12px;color:#000;font-weight:normal;"><span class="num">15,00%</span></div>
<div class="t" style="right:598.8499999999999px;top:567.44px;font-size:12px;color:#000;font-weight:normal;"><span class="sym">€</span><span class="num">15.000,00</span></div>
<div class="t" style="right:450.15px;top:567.44px;font-size:12px;color:#888888;font-weight:normal;"><span class="sym">€</span><span class="num">2.250,00</span></div>
<div class="t" style="right:369.85px;top:567.44px;font-size:12px;color:#000;font-weight:normal;"><span class="sym pct">%</span><span class="num">100,00</span></div>
<svg class="b" style="left:690px;top:557px" width="5" height="5" viewBox="0 0 5 5"><path d="M0 0 H5 V5 Z" fill="#d8a0a0"/></svg>
<div class="t" style="right:293.94999999999993px;top:567.44px;font-size:12px;color:#000;font-weight:normal;"><span class="sym pct">%</span><span class="num">19,00</span></div>
<div class="b" style="left:778px;top:557px;width:55px;height:20px;overflow:hidden;"><div class="t" style="right:5.0499999999999545px;top:10.44px;font-size:12px;color:#888888;font-weight:normal;"><span class="sym">€</span><span class="num">427,50</span></div></div>
<div class="t" style="right:32.350000000000136px;top:567.44px;font-size:12px;color:#888888;font-weight:normal;"><span class="sym">€</span><span class="num">2.250,00</span></div>
<div class="b" style="left:17px;top:598px;width:1016px;height:1px;background-image:linear-gradient(90deg,#e2e2e2 50%,transparent 50%);background-size:2px 1px;"></div>
<div class="b" style="left:75px;top:578px;width:1px;height:20px;background-image:linear-gradient(180deg,#e4e4e4 50%,transparent 50%);background-size:1px 2px;"></div>
<div class="b" style="left:280px;top:578px;width:1px;height:20px;background-image:linear-gradient(180deg,#e4e4e4 50%,transparent 50%);background-size:1px 2px;"></div>
<div class="b" style="left:386px;top:578px;width:1px;height:20px;background-image:linear-gradient(180deg,#e4e4e4 50%,transparent 50%);background-size:1px 2px;"></div>
<div class="b" style="left:466px;top:578px;width:1px;height:20px;background-image:linear-gradient(180deg,#e4e4e4 50%,transparent 50%);background-size:1px 2px;"></div>
<div class="b" style="left:615px;top:578px;width:1px;height:20px;background-image:linear-gradient(180deg,#e4e4e4 50%,transparent 50%);background-size:1px 2px;"></div>
<div class="b" style="left:695px;top:578px;width:1px;height:20px;background-image:linear-gradient(180deg,#e4e4e4 50%,transparent 50%);background-size:1px 2px;"></div>
<div class="b" style="left:771px;top:578px;width:1px;height:20px;background-image:linear-gradient(180deg,#e4e4e4 50%,transparent 50%);background-size:1px 2px;"></div>
<div class="b" style="left:833px;top:578px;width:1px;height:20px;background-image:linear-gradient(180deg,#e4e4e4 50%,transparent 50%);background-size:1px 2px;"></div>
<div class="b" style="left:1033px;top:578px;width:1px;height:20px;background-image:linear-gradient(180deg,#e4e4e4 50%,transparent 50%);background-size:1px 2px;"></div>
<div class="t" style="left:26.5px;top:588.44px;font-size:12px;color:#888888;font-weight:normal;">4</div>
<div class="t" style="left:86px;top:588.44px;font-size:12px;color:#000;font-weight:normal;">LP4 - Approval</div>
<div class="t" style="right:678.65px;top:588.44px;font-size:12px;color:#000;font-weight:normal;"><span class="num">3,00%</span></div>
<div class="t" style="right:598.8499999999999px;top:588.44px;font-size:12px;color:#000;font-weight:normal;"><span class="sym">€</span><span class="num">3.000,00</span></div>
<div class="t" style="right:450.15px;top:588.44px;font-size:12px;color:#888888;font-weight:normal;"><span class="sym">€</span><span class="num">90,00</span></div>
<div class="t" style="right:369.85px;top:588.44px;font-size:12px;color:#000;font-weight:normal;"><span class="sym pct">%</span><span class="num">100,00</span></div>
<svg class="b" style="left:690px;top:578px" width="5" height="5" viewBox="0 0 5 5"><path d="M0 0 H5 V5 Z" fill="#d8a0a0"/></svg>
<div class="t" style="right:293.94999999999993px;top:588.44px;font-size:12px;color:#000;font-weight:normal;"><span class="sym pct">%</span><span class="num">19,00</span></div>
<div class="b" style="left:778px;top:578px;width:55px;height:20px;overflow:hidden;"><div class="t" style="right:5.0499999999999545px;top:10.44px;font-size:12px;color:#888888;font-weight:normal;"><span class="sym">€</span><span class="num">17,10</span></div></div>
<div class="t" style="right:32.350000000000136px;top:588.44px;font-size:12px;color:#888888;font-weight:normal;"><span class="sym">€</span><span class="num">90,00</span></div>
<div class="b" style="left:17px;top:619px;width:1016px;height:1px;background-image:linear-gradient(90deg,#e2e2e2 50%,transparent 50%);background-size:2px 1px;"></div>
<div class="b" style="left:75px;top:599px;width:1px;height:20px;background-image:linear-gradient(180deg,#e4e4e4 50%,transparent 50%);background-size:1px 2px;"></div>
<div class="b" style="left:280px;top:599px;width:1px;height:20px;background-image:linear-gradient(180deg,#e4e4e4 50%,transparent 50%);background-size:1px 2px;"></div>
<div class="b" style="left:386px;top:599px;width:1px;height:20px;background-image:linear-gradient(180deg,#e4e4e4 50%,transparent 50%);background-size:1px 2px;"></div>
<div class="b" style="left:466px;top:599px;width:1px;height:20px;background-image:linear-gradient(180deg,#e4e4e4 50%,transparent 50%);background-size:1px 2px;"></div>
<div class="b" style="left:615px;top:599px;width:1px;height:20px;background-image:linear-gradient(180deg,#e4e4e4 50%,transparent 50%);background-size:1px 2px;"></div>
<div class="b" style="left:695px;top:599px;width:1px;height:20px;background-image:linear-gradient(180deg,#e4e4e4 50%,transparent 50%);background-size:1px 2px;"></div>
<div class="b" style="left:771px;top:599px;width:1px;height:20px;background-image:linear-gradient(180deg,#e4e4e4 50%,transparent 50%);background-size:1px 2px;"></div>
<div class="b" style="left:833px;top:599px;width:1px;height:20px;background-image:linear-gradient(180deg,#e4e4e4 50%,transparent 50%);background-size:1px 2px;"></div>
<div class="b" style="left:1033px;top:599px;width:1px;height:20px;background-image:linear-gradient(180deg,#e4e4e4 50%,transparent 50%);background-size:1px 2px;"></div>
<div class="t" style="left:26.5px;top:609.44px;font-size:12px;color:#888888;font-weight:normal;">5</div>
<div class="t" style="left:86px;top:609.44px;font-size:12px;color:#000;font-weight:normal;">LP5 - Building</div>
<div class="t" style="right:678.65px;top:609.44px;font-size:12px;color:#000;font-weight:normal;"><span class="num">25,00%</span></div>
<div class="t" style="right:598.8499999999999px;top:609.44px;font-size:12px;color:#000;font-weight:normal;"><span class="sym">€</span><span class="num">25.000,00</span></div>
<div class="t" style="right:450.15px;top:609.44px;font-size:12px;color:#888888;font-weight:normal;"><span class="sym">€</span><span class="num">6.250,00</span></div>
<div class="t" style="right:369.85px;top:609.44px;font-size:12px;color:#000;font-weight:normal;"><span class="sym pct">%</span><span class="num">100,00</span></div>
<svg class="b" style="left:690px;top:599px" width="5" height="5" viewBox="0 0 5 5"><path d="M0 0 H5 V5 Z" fill="#d8a0a0"/></svg>
<div class="t" style="right:293.94999999999993px;top:609.44px;font-size:12px;color:#000;font-weight:normal;"><span class="sym pct">%</span><span class="num">19,00</span></div>
<div class="b" style="left:778px;top:599px;width:55px;height:20px;overflow:hidden;"><div class="t" style="right:5.0499999999999545px;top:10.44px;font-size:12px;color:#888888;font-weight:normal;"><span class="sym">€</span><span class="num">1.187,50</span></div></div>
<div class="t" style="right:32.350000000000136px;top:609.44px;font-size:12px;color:#888888;font-weight:normal;"><span class="sym">€</span><span class="num">6.250,00</span></div>
<div class="b" style="left:22px;top:620px;width:811px;height:1px;background:#d0d0d0;"></div>
<div class="b" style="left:22px;top:622px;width:811px;height:1px;background:#bdbdbd;"></div>
<div class="b" style="left:834px;top:620px;width:199px;height:1px;background:#d0d0d0;"></div>
<div class="b" style="left:834px;top:622px;width:199px;height:1px;background:#bdbdbd;"></div>
<div class="b" style="left:17px;top:640px;width:1016px;height:1px;background-image:linear-gradient(90deg,#e2e2e2 50%,transparent 50%);background-size:2px 1px;"></div>
<div class="b" style="left:17px;top:661px;width:1016px;height:1px;background-image:linear-gradient(90deg,#e2e2e2 50%,transparent 50%);background-size:2px 1px;"></div>
<div class="b" style="left:17px;top:682px;width:1016px;height:1px;background-image:linear-gradient(90deg,#e2e2e2 50%,transparent 50%);background-size:2px 1px;"></div>
<div class="b" style="left:386px;top:623px;width:1px;height:60px;background-image:linear-gradient(180deg,#e4e4e4 50%,transparent 50%);background-size:1px 2px;"></div>
<div class="b" style="left:833px;top:623px;width:1px;height:60px;background-image:linear-gradient(180deg,#e4e4e4 50%,transparent 50%);background-size:1px 2px;"></div>
<div class="b" style="left:1033px;top:623px;width:1px;height:60px;background-image:linear-gradient(180deg,#e4e4e4 50%,transparent 50%);background-size:1px 2px;"></div>
<div class="t" style="right:231.76979166666672px;top:629.84px;font-size:12px;color:#000;font-weight:normal;letter-spacing:-0.570px;">Sum:</div>
<div class="t" style="right:32.350000000000136px;top:629.84px;font-size:12px;color:#000;font-weight:normal;"><span class="sym">€</span><u><span class="num">9.120,00</span></u></div>
<div class="t" style="right:231.76979166666672px;top:650.84px;font-size:12px;color:#000;font-weight:normal;letter-spacing:-0.570px;">TAX (19%):</div>
<div class="t" style="right:32.350000000000136px;top:650.84px;font-size:12px;color:#000;font-weight:normal;"><span class="sym">€</span><span class="num">+1.732,80</span></div>
<div class="t" style="right:231.71406250000007px;top:671.84px;font-size:12px;color:#000;font-weight:bold;letter-spacing:-0.514px;">Total:</div>
<div class="t" style="right:31.700000000000045px;top:671.84px;font-size:12px;color:#000;font-weight:bold;"><span class="sym">€</span><u>10.852,80</u></div>
<svg class="b" style="left:14px;top:711px" width="17" height="17" viewBox="0 0 17 17"><circle cx="8" cy="8" r="8" fill="#1f8fdc"/><path d="M13.6 2.4 A8 8 0 0 1 2.4 13.6 Z" fill="#168bd8"/><circle cx="8" cy="8" r="7.2" fill="#27a0ea" opacity="0.85"/><rect x="6.9" y="6.6" width="2.2" height="6.4" fill="#fff"/><rect x="6.9" y="3.3" width="2.2" height="2.2" fill="#fff"/></svg>
<div class="t" style="left:36.4px;top:718.84px;font-size:12px;color:#000;font-weight:normal;"><b>Ins</b> = New item | <b>Ctrl</b> + <b>Ins</b> = Item from catalog | <b>Ctrl</b> + <b>Up</b> = Item up | <b>Ctrl</b> + <b>Down</b> = Item Down | <b>Ctrl</b> + <b>K</b> = Edit comment</div>
<svg class="b" style="left:1030px;top:711px" width="13" height="12" viewBox="0 0 13 12"><path d="M1.8 1.8 L11.2 10.2 M11.2 1.8 L1.8 10.2" stroke="#333" stroke-width="2.8"/></svg>
<div class="b" style="left:10px;top:741px;width:25px;height:25px;border:1px solid #d0d0d0;border-radius:4px;background:#fdfdfd;box-sizing:border-box;"></div>
<svg class="b" style="left:15px;top:747px" width="14" height="15" viewBox="0 0 14 15"><rect x="0" y="0" width="14" height="15" fill="#3d5566"/><rect x="2.6" y="0" width="9" height="6" fill="#d3ecfa"/><rect x="7" y="0" width="4.6" height="6" fill="#b3dcf5"/><rect x="2.6" y="6" width="9" height="2.1" fill="#ff8a00"/><rect x="3" y="9.6" width="8.6" height="5.4" fill="#e4eaee"/><rect x="4.3" y="10.2" width="1.7" height="4" fill="#3d5566"/></svg>
<div class="b" style="left:718px;top:741px;width:151px;height:25px;border:1px solid #d0d0d0;border-radius:4px;background:#fdfdfd;box-sizing:border-box;"></div>
<div class="t" style="left:794.0px;transform:translateX(-50%);top:754.24px;font-size:12px;color:#000;font-weight:normal;letter-spacing:-0.355px;"><u>S</u>ave &amp; Close</div>
<div class="b" style="left:873px;top:741px;width:88px;height:25px;border:1px solid #d0d0d0;border-radius:4px;background:#fdfdfd;box-sizing:border-box;"></div>
<div class="t" style="left:917.5px;transform:translateX(-50%);top:754.24px;font-size:12px;color:#000;font-weight:normal;letter-spacing:-0.470px;">Cancel</div>
<div class="b" style="left:965px;top:741px;width:88px;height:25px;border:1px solid #d0d0d0;border-radius:4px;background:#fdfdfd;box-sizing:border-box;"></div>
<div class="t" style="left:1009.5px;transform:translateX(-50%);top:754.24px;font-size:12px;color:#000;font-weight:normal;">Help</div>
</body></html>
